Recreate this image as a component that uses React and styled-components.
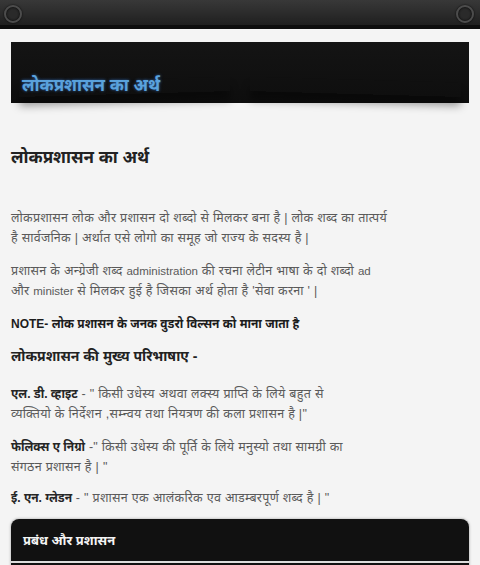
import React from 'react'
import styled, { createGlobalStyle } from 'styled-components'

const GlobalStyle = createGlobalStyle`
  html, body {
    margin: 0;
    padding: 0;
    background: #f4f4f4;
  }
  body {
    font-family: 'Liberation Sans', Arial, 'Noto Sans', sans-serif;
    width: 480px;
    height: 565px;
    overflow: hidden;
  }
`

const TopBar = styled.div`
  height: 25px;
  background: linear-gradient(to bottom, #383838 0%, #2c2c2c 50%, #1f1f1f 100%);
  border-bottom: 4px solid #0d0d0d;
  display: flex;
  align-items: center;
  justify-content: space-between;
  padding: 0 6px 0 4px;
`

const Knob = styled.span`
  width: 14px;
  height: 14px;
  margin-top: 2px;
  border-radius: 50%;
  border: 2px solid #4c4c4c;
  background: radial-gradient(circle, #2a2a2a 40%, #1c1c1c 100%);
  box-shadow: 0 0 2px rgba(0, 0, 0, 0.9), inset 0 0 2px rgba(0, 0, 0, 0.8);
`

const Page = styled.div`
  padding: 13px 11px 0;
`

const Banner = styled.div`
  position: relative;
  isolation: isolate;
  height: 61px;
  background: linear-gradient(to bottom, #141414, #0e0e0e);
  display: flex;
  align-items: flex-end;
  padding: 0 11px 7px;
  box-sizing: border-box;
  margin-bottom: 44px;

  &::before,
  &::after {
    content: '';
    position: absolute;
    bottom: 9px;
    width: 46%;
    height: 14px;
    box-shadow: 0 9px 8px rgba(0, 0, 0, 0.38);
    z-index: -1;
  }
  &::before {
    left: 8px;
    transform: rotate(-1.6deg);
  }
  &::after {
    right: 8px;
    transform: rotate(1.6deg);
  }
`

const BannerTitle = styled.h1`
  margin: 0;
  font-size: 17px;
  font-weight: bold;
  color: #5aa2dc;
  text-shadow: 0 0 3px rgba(60, 130, 220, 0.75);
`

const Heading = styled.h2`
  margin: 0 0 ${(p) => p.$gap || 10}px;
  font-size: ${(p) => p.$size || 17}px;
  font-weight: bold;
  color: #222;
  line-height: 1.3;
`

const Para = styled.p`
  margin: 0 0 ${(p) => p.$gap ?? 13}px;
  font-size: 12.5px;
  letter-spacing: 0.3px;
  line-height: 20px;
  color: #5a5a5a;
  white-space: nowrap;

  b {
    font-size: 12px;
    letter-spacing: 0;
    color: #262626;
  }
`

const Latin = styled.span`
  font-size: 11.5px;
  letter-spacing: 0;
`

const Note = styled.p`
  margin: 0 0 13px;
  font-size: 12px;
  font-weight: bold;
  color: #1c1c1c;
  line-height: 20px;
`

const Box = styled.div`
  margin-top: 11px;
  background: #111;
  border-radius: 8px 8px 0 0;
  box-shadow: 0 0 0 1px #d6d6d6, 0 0 3px rgba(0, 0, 0, 0.35);
`

const BoxTitle = styled.div`
  padding: 12px 12px 12px;
  font-size: 13px;
  font-weight: bold;
  color: #f4f4f4;
  border-bottom: 2px solid #dcdcdc;
`

const BoxBody = styled.div`
  height: 20px;
`

export default function App() {
  return (
    <>
      <GlobalStyle />
      <TopBar>
        <Knob />
        <Knob />
      </TopBar>
      <Page>
        <Banner>
          <BannerTitle>लोकप्रशासन का अर्थ</BannerTitle>
        </Banner>
        <Heading $gap={39}>लोकप्रशासन का अर्थ</Heading>
        <Para>
          लोकप्रशासन लोक और प्रशासन दो शब्दो से मिलकर बना है | लोक शब्द का तात्पर्य
          <br />
          है सार्वजनिक | अर्थात एसे लोगो का समूह जो राज्य के सदस्य है |
        </Para>
        <Para>
          प्रशासन के अन्ग्रेजी शब्द <Latin>administration</Latin> की रचना लेटीन भाषा के दो शब्दो{' '}
          <Latin>ad</Latin>
          <br />
          और <Latin>minister</Latin> से मिलकर हुई है जिसका अर्थ होता है 'सेवा करना ' |
        </Para>
        <Note>NOTE- लोक प्रशासन के जनक वुडरो विल्सन को माना जाता है</Note>
        <Heading $size={14} $gap={19}>लोकप्रशासन की मुख्य परिभाषाए -</Heading>
        <Para>
          <b>एल. डी. व्हाइट</b> - " किसी उधेस्य अथवा लक्स्य प्राप्ति के लिये बहुत से
          <br />
          व्यक्तियो के निर्देशन ,सम्न्वय तथा नियत्रण की कला प्रशासन है |"
        </Para>
        <Para $gap={11}>
          <b>फेलिक्स ए निग्रो</b> -" किसी उधेस्य की पूर्ति के लिये मनुस्यो तथा सामग्री का
          <br />
          संगठन प्रशासन है | "
        </Para>
        <Para $gap={0}>
          <b>ई. एन. ग्लेडन</b> - " प्रशासन एक आलंकरिक एव आडम्बरपूर्ण शब्द है | "
        </Para>
        <Box>
          <BoxTitle>प्रबंध और प्रशासन</BoxTitle>
          <BoxBody />
        </Box>
      </Page>
    </>
  )
}
